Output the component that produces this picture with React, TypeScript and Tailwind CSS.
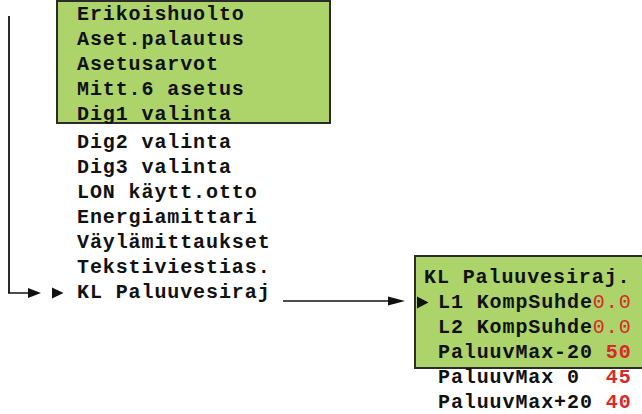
import React from "react";

const topBox = ["Erikoishuolto", "Aset.palautus", "Asetusarvot", "Mitt.6 asetus", "Dig1 valinta"];
const below = ["Dig2 valinta", "Dig3 valinta", "LON käytt.otto", "Energiamittari", "Väylämittaukset", "Tekstiviestias.", "KL Paluuvesiraj"];

export default function App() {
  return (
    <div className="relative w-[642px] h-[414px] overflow-hidden bg-white text-[#111] font-['Liberation_Mono',monospace] font-bold text-[20px] leading-[25px] tracking-[0.9px] whitespace-pre">
      <div className="flex items-start">
        <div className="ml-[56px] w-[275px] shrink-0">
          <div className="h-[124px] border-2 border-[#2b2b2b] bg-[#acd46b] pl-[19px]">
            {topBox.map((t) => (
              <div key={t} className="h-[25px]">{t}</div>
            ))}
          </div>
          <div className="mt-[6px] pl-[21px]">
            {below.map((t) => (
              <div key={t} className="h-[25px]">{t}</div>
            ))}
          </div>
        </div>
        <div className="ml-[83px] mt-[255px] w-[240px] shrink-0">
          <div className="h-[114px] border-2 border-[#2b2b2b] bg-[#acd46b] pt-[8px] pl-[8px]">
            <div className="h-[25px]">KL Paluuvesiraj.</div>
            <div className="h-[25px] pl-[14px]">L1 KompSuhde<span className="text-[#d8282a] font-normal">0.0</span></div>
            <div className="h-[25px] pl-[14px]">L2 KompSuhde<span className="text-[#d8282a] font-normal">0.0</span></div>
            <div className="h-[25px] pl-[14px]">PaluuvMax-20 <span className="text-[#d8282a]">50</span></div>
          </div>
          <div className="-mt-[4px] pl-[24px]">
            <div className="h-[25px]">PaluuvMax 0  <span className="text-[#d8282a]">45</span></div>
            <div className="h-[25px]">PaluuvMax+20 <span className="text-[#d8282a]">40</span></div>
          </div>
        </div>
      </div>
      <svg className="absolute inset-0 pointer-events-none" width="642" height="414" viewBox="0 0 642 414">
        <line x1="9" y1="16" x2="9" y2="293" stroke="#2a2a2a" strokeWidth="2" />
        <line x1="8" y1="293" x2="31" y2="293" stroke="#111" strokeWidth="1.5" />
        <polygon points="28,288 41,293 28,298" fill="#111" />
        <polygon points="52,287.5 63.5,293 52,298.5" fill="#111" />
        <line x1="283" y1="301" x2="390" y2="301" stroke="#111" strokeWidth="1.5" />
        <polygon points="388,296.5 405,301 388,305.5" fill="#111" />
        <polygon points="417,296.5 428.5,302.5 417,308.5" fill="#111" />
      </svg>
    </div>
  );
}
